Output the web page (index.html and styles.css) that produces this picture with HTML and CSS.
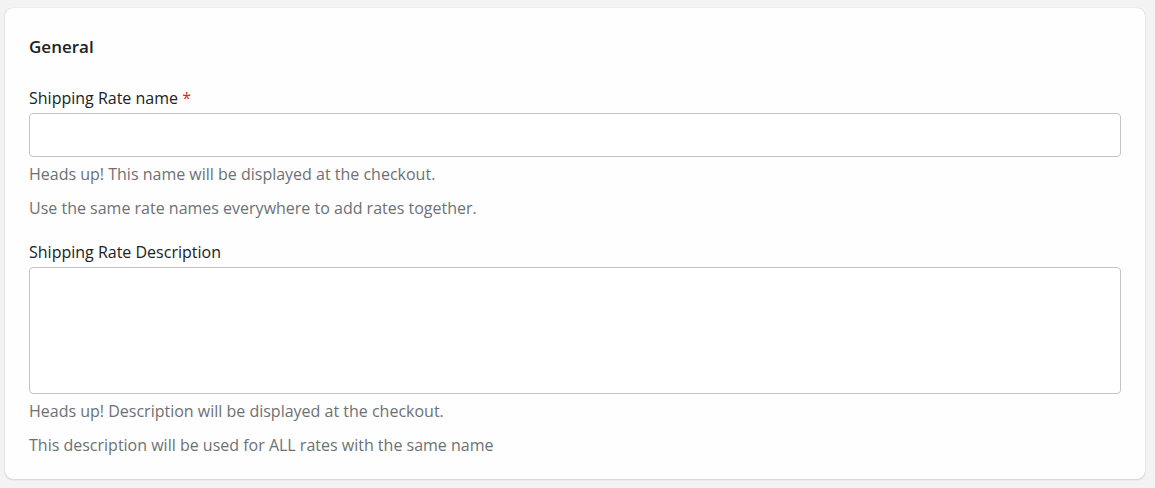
FILE: index.html
```html
<!DOCTYPE html>
<html>
<head>
<meta charset="utf-8">
<link rel="stylesheet" href="styles.css">
</head>
<body>
<div class="card">
  <h2 class="title">General</h2>
  <div class="field">
    <label class="label">Shipping Rate name <span class="req">*</span></label>
    <input class="input" type="text">
    <p class="help">Heads up! This name will be displayed at the checkout.</p>
    <p class="help">Use the same rate names everywhere to add rates together.</p>
  </div>
  <div class="field">
    <label class="label">Shipping Rate Description</label>
    <textarea class="textarea"></textarea>
    <p class="help">Heads up! Description will be displayed at the checkout.</p>
    <p class="help">This description will be used for ALL rates with the same name</p>
  </div>
</div>
</body>
</html>
```
FILE: styles.css
```css
html, body {
  margin: 0;
  padding: 0;
  background: #f3f3f3;
  font-family: "Open Sans", "Noto Sans", sans-serif;
}
body {
  padding: 8px 10px 9px 5px;
}
.card {
  background: #fefefe;
  border-radius: 8px;
  box-shadow: 0 0 1px rgba(0,0,0,0.2), 0 1px 2px rgba(0,0,0,0.12);
  padding: 24px 24px 22px;
  height: 471px;
  box-sizing: border-box;
}
.title {
  margin: 0 0 26px;
  font-size: 17px;
  font-weight: 600;
  color: #202223;
  line-height: 30px;
}
.field {
  display: flex;
  flex-direction: column;
}
.field + .field {
  margin-top: 17px;
}
.label {
  font-size: 16px;
  color: #202223;
  line-height: 20px;
  margin-bottom: 5px;
}
.req { color: #d72c0d; }
.input, .textarea {
  box-sizing: border-box;
  width: 100%;
  border: 1px solid #c4c4c4;
  border-radius: 4px;
  background: #fff;
  margin: 0;
  font: inherit;
}
.input { height: 44px; }
.textarea { height: 127px; resize: none; display: block; }
.help {
  margin: 0;
  font-size: 16px;
  color: #6d7175;
  line-height: 34px;
}
```
